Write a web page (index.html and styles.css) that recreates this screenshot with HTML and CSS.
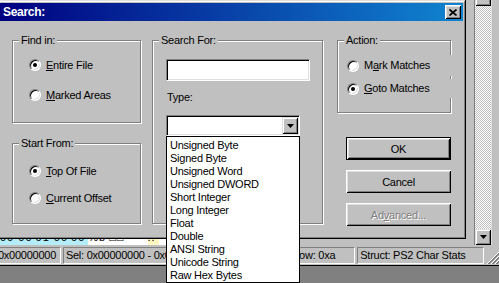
FILE: index.html
```html
<!DOCTYPE html>
<html lang="en">
<head>
    <meta charset="UTF-8">
    <title>Search</title>
    <link rel="stylesheet" href="styles.css">
</head>
<body>
    <!-- Hex editor window behind the dialog -->
    <div class="app">
        <div class="app-main">
            <div class="hexview">
                <div class="hexrow">
                    <span class="cell sel">00 00</span>
                    <span class="cell sel">01 00</span>
                    <span class="cell sel">00</span>
                    <span class="cell">%b</span>
                    <span class="cell">□□</span>
                    <span class="cell warn">..</span>
                </div>
            </div>
            <div class="vscroll">
                <div class="sbtn up"></div>
                <div class="track"></div>
                <div class="sbtn down">
                    <svg width="7" height="4" viewBox="0 0 7 4"><path d="M0 0h7L3.5 4z" fill="#000"/></svg>
                </div>
            </div>
            <div class="frame-right"></div>
        </div>
        <div class="statusbar">
            <div class="panel p1">0x00000000</div>
            <div class="panel p2">Sel: 0x00000000 - 0x00000000</div>
            <div class="panel p3">Row: 0xa</div>
            <div class="panel p4">Struct: PS2 Char Stats</div>
            <div class="grip">
                <svg width="12" height="12" viewBox="0 0 12 12" shape-rendering="crispEdges">
                    <path d="M12 0L0 12M12 4L4 12M12 8L8 12" stroke="#fff"/>
                    <path d="M12 1L1 12M12 2L2 12M12 5L5 12M12 6L6 12M12 9L9 12M12 10L10 12" stroke="#808080"/>
                </svg>
            </div>
        </div>
    </div>

    <!-- Search dialog -->
    <div class="dialog">
        <div class="titlebar">
            <span class="title">Search:</span>
            <div class="close">
                <svg width="8" height="7" viewBox="0 0 8 7"><path d="M0.5 0.5l7 6M7.5 0.5l-7 6" stroke="#000" stroke-width="1.7"/></svg>
            </div>
        </div>
        <div class="client">
            <div class="col col-left">
                <div class="group find-in">
                    <span class="group-title">Find in:</span>
                    <div class="radio checked"><span class="dot"></span><span><u>E</u>ntire File</span></div>
                    <div class="radio"><span class="dot"></span><span><u>M</u>arked Areas</span></div>
                </div>
                <div class="group start-from">
                    <span class="group-title">Start From:</span>
                    <div class="radio checked"><span class="dot"></span><span><u>T</u>op Of File</span></div>
                    <div class="radio"><span class="dot"></span><span><u>C</u>urrent Offset</span></div>
                </div>
            </div>
            <div class="col col-mid">
                <div class="group search-for">
                    <span class="group-title">Search For:</span>
                    <div class="edit"></div>
                    <div class="label">Type:</div>
                    <div class="combo">
                        <div class="combo-btn">
                            <svg width="7" height="4" viewBox="0 0 7 4"><path d="M0 0h7L3.5 4z" fill="#000"/></svg>
                        </div>
                        <ul class="droplist">
                            <li>Unsigned Byte</li>
                            <li>Signed Byte</li>
                            <li>Unsigned Word</li>
                            <li>Unsigned DWORD</li>
                            <li>Short Integer</li>
                            <li>Long Integer</li>
                            <li>Float</li>
                            <li>Double</li>
                            <li>ANSI String</li>
                            <li>Unicode String</li>
                            <li>Raw Hex Bytes</li>
                        </ul>
                    </div>
                </div>
            </div>
            <div class="col col-right">
                <div class="group action">
                    <span class="group-title">Action:</span>
                    <div class="radio"><span class="dot"></span><span>M<u>a</u>rk Matches</span></div>
                    <div class="radio checked"><span class="dot"></span><span><u>G</u>oto Matches</span></div>
                </div>
                <div class="btn default">OK</div>
                <div class="btn">Cancel</div>
                <div class="btn disabled">Ad<u>v</u>anced...</div>
            </div>
        </div>
    </div>
</body>
</html>
```

FILE: styles.css
```css
* {
    margin: 0;
    padding: 0;
    box-sizing: border-box;
}
body {
    position: relative;
    width: 499px;
    height: 283px;
    overflow: hidden;
    background: #808080;
    font-family: "Liberation Sans", Arial, sans-serif;
    font-size: 11px;
    letter-spacing: -0.25px;
    color: #000;
}

/* background window */
.app {
    width: 499px;
    height: 266px;
    background: #c0c0c0;
    border-bottom: 1px solid #000;
    display: flex;
    flex-direction: column;
}
.app-main {
    flex: 1;
    display: flex;
}
.hexview {
    flex: 1;
    display: flex;
    flex-direction: column;
    justify-content: flex-end;
    border-right: 1px solid #808080;
}
.hexrow {
    height: 6px;
    overflow: hidden;
    display: flex;
    width: 300px;
    background: #fff;
}
.cell {
    line-height: 13px;
    margin-top: -8px;
    padding: 0 3px 0 0;
    letter-spacing: 1px;
}
.cell.sel {
    background: #b4ecf8;
}
.cell.warn {
    background: #fff8c0;
    margin-left: 20px;
}
.vscroll {
    width: 16px;
    display: flex;
    flex-direction: column;
    background: repeating-conic-gradient(#c0c0c0 0 25%, #fff 0 50%) 0 0 / 2px 2px;
}
.track {
    flex: 1;
}
.sbtn {
    width: 16px;
    height: 16px;
    background: #c0c0c0;
    display: flex;
    align-items: center;
    justify-content: center;
    box-shadow: inset 1px 1px #dfdfdf, inset -1px -1px #000, inset 2px 2px #fff, inset -2px -2px #808080;
}
.sbtn.up {
    margin-top: -10px;
}
.frame-right {
    width: 8px;
    border-left: 1px solid #dfdfdf;
}
.statusbar {
    height: 20px;
    margin-left: -5px;
    padding: 2px 0 1px;
    display: flex;
    gap: 2px;
}
.panel {
    height: 17px;
    line-height: 15px;
    padding: 0 2px;
    border: 1px solid;
    border-color: #808080 #fff #fff #808080;
    white-space: nowrap;
    overflow: hidden;
}
.p1 { width: 66px; }
.p2 { width: 224px; }
.p3 { width: 67px; }
.p4 { width: 127px; }
.grip {
    width: 12px;
    margin-left: 1px;
    display: flex;
    align-items: flex-end;
}

/* dialog */
.dialog {
    position: absolute;
    left: -3px;
    top: 0;
    width: 469px;
    height: 239px;
    padding: 3px;
    background: #c0c0c0;
    box-shadow: inset -1px -1px #000, inset 1px 1px #dfdfdf, inset -2px -2px #808080, inset 2px 2px #fff;
}
.titlebar {
    height: 18px;
    padding: 0 2px 0 3px;
    display: flex;
    align-items: center;
    justify-content: space-between;
    background: linear-gradient(to right, #000080, #1084d0);
    color: #fff;
}
.title {
    font-weight: bold;
    font-size: 12px;
    letter-spacing: -0.3px;
}
.close {
    width: 16px;
    height: 14px;
    display: flex;
    align-items: center;
    justify-content: center;
    background: #c0c0c0;
    box-shadow: inset 1px 1px #fff, inset -1px -1px #000, inset 2px 2px #dfdfdf, inset -2px -2px #808080;
}
.client {
    display: flex;
    padding: 19px 0 0 12px;
}
.col {
    display: flex;
    flex-direction: column;
}
.col-left { width: 129px; }
.col-mid { width: 171px; margin-left: 11px; }
.col-right { width: 114px; margin-left: 14px; }

.group {
    --pad: 16px;
    display: flex;
    flex-direction: column;
    align-items: flex-start;
    padding-left: var(--pad);
    border: 1px solid #808080;
    box-shadow: inset 1px 1px #fff, 1px 1px #fff;
}
.group-title {
    margin: -7px 0 0 calc(6px - var(--pad));
    padding: 0 2px;
    line-height: 13px;
    background: #c0c0c0;
}
.find-in { height: 83px; }
.find-in .radio:nth-of-type(1) { margin-top: 10px; }
.find-in .radio:nth-of-type(2) { margin-top: 14px; }
.start-from { height: 81px; margin-top: 20px; }
.start-from .radio:nth-of-type(1) { margin-top: 13px; }
.start-from .radio:nth-of-type(2) { margin-top: 11px; }
.search-for { height: 184px; --pad: 13px; }
.action { height: 73px; --pad: 9px; }
.action .radio {
    align-self: stretch;
    margin-right: -12px;
    background: #c0c0c0;
}
.action .radio:nth-of-type(1) { margin-top: 8px; height: 21px; }
.action .radio:nth-of-type(2) { margin-top: 3px; height: 19px; }

.radio {
    display: flex;
    align-items: center;
    gap: 5px;
    height: 16px;
    line-height: 13px;
    white-space: nowrap;
}
.dot {
    width: 12px;
    height: 12px;
    flex: none;
    border-radius: 50%;
    background: #fff;
    border: 1px solid;
    border-color: #808080 #fff #fff #808080;
    box-shadow: inset 1px 1px #000, inset -1px -1px #dfdfdf;
}
.checked .dot::after {
    content: "";
    display: block;
    width: 4px;
    height: 4px;
    margin: 3px;
    border-radius: 50%;
    background: #000;
}

.edit {
    width: 144px;
    height: 22px;
    margin-top: 12px;
    background: #fff;
    border: 1px solid;
    border-color: #808080 #fff #fff #808080;
    box-shadow: inset 1px 1px #000, inset -1px -1px #dfdfdf;
}
.label {
    margin: 10px 0 0 1px;
    line-height: 13px;
}
.combo {
    position: relative;
    width: 134px;
    height: 21px;
    margin-top: 11px;
    padding: 1px;
    display: flex;
    justify-content: flex-end;
    background: #fff;
    border: 1px solid;
    border-color: #808080 #fff #fff #808080;
    box-shadow: inset 1px 1px #000, inset -1px -1px #dfdfdf;
}
.combo-btn {
    width: 16px;
    height: 17px;
    display: flex;
    align-items: center;
    justify-content: center;
    background: #c0c0c0;
    box-shadow: inset 1px 1px #dfdfdf, inset -1px -1px #000, inset 2px 2px #fff, inset -2px -2px #808080;
}
.droplist {
    position: absolute;
    top: calc(100% + 1px);
    left: -1px;
    width: 134px;
    padding-top: 2px;
    list-style: none;
    background: #fff;
    border: 1px solid #000;
    z-index: 2;
}
.droplist li {
    line-height: 13px;
    padding-left: 3px;
    white-space: nowrap;
}

.btn {
    width: 105px;
    height: 23px;
    margin: 10px 0 0 9px;
    display: flex;
    align-items: center;
    justify-content: center;
    background: #c0c0c0;
    box-shadow: inset 1px 1px #fff, inset -1px -1px #000, inset 2px 2px #dfdfdf, inset -2px -2px #808080;
}
.btn.default {
    margin-top: 24px;
    border: 1px solid #000;
}
.btn.disabled {
    color: #808080;
    text-shadow: 1px 1px #fff;
}
```
